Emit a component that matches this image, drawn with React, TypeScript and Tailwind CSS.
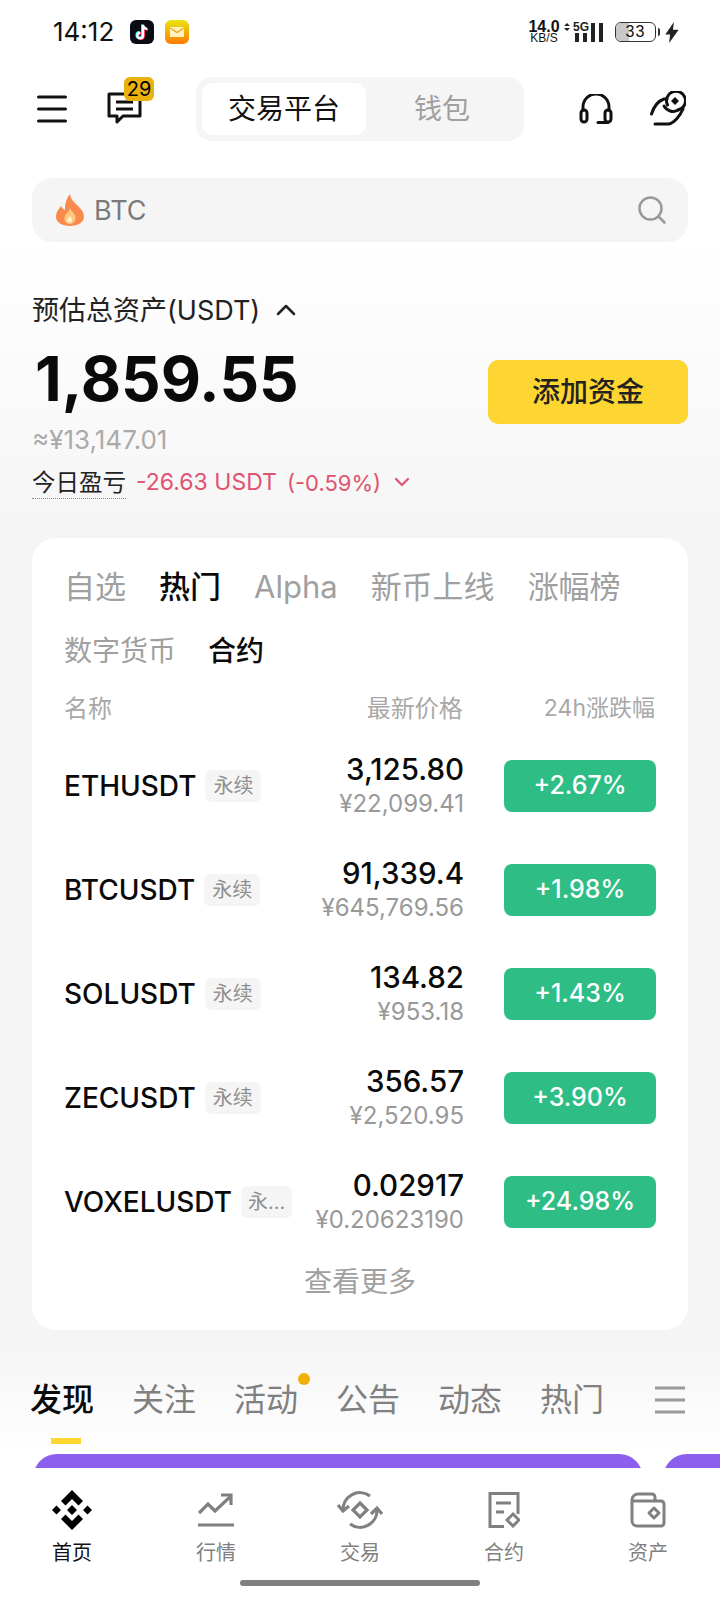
const coins = [
  { name: "ETHUSDT", tag: "永续", price: "3,125.80", cny: "¥22,099.41", change: "+2.67%" },
  { name: "BTCUSDT", tag: "永续", price: "91,339.4", cny: "¥645,769.56", change: "+1.98%" },
  { name: "SOLUSDT", tag: "永续", price: "134.82", cny: "¥953.18", change: "+1.43%" },
  { name: "ZECUSDT", tag: "永续", price: "356.57", cny: "¥2,520.95", change: "+3.90%" },
  { name: "VOXELUSDT", tag: "永...", price: "0.02917", cny: "¥0.20623190", change: "+24.98%" },
];

function StatusBar() {
  return (
    <div className="flex h-[64px] items-center justify-between pl-[53px] pr-[41px]">
      <div className="flex items-center">
        <span className="w-[77px] text-[26px] leading-none text-[#111]">14:12</span>
        <svg width="24" height="24" viewBox="0 0 24 24">
          <rect width="24" height="24" rx="6" fill="#0b0b14" />
          <path d="M13 5v10.5a2.8 2.8 0 1 1-2.8-2.8M13 5c.3 2.4 1.8 3.8 4.2 4" fill="none" stroke="#25f4ee" strokeWidth="2.4" transform="translate(-.8 -.6)" />
          <path d="M13 5v10.5a2.8 2.8 0 1 1-2.8-2.8M13 5c.3 2.4 1.8 3.8 4.2 4" fill="none" stroke="#fe2c55" strokeWidth="2.4" transform="translate(.8 .6)" />
          <path d="M13 5v10.5a2.8 2.8 0 1 1-2.8-2.8M13 5c.3 2.4 1.8 3.8 4.2 4" fill="none" stroke="#fff" strokeWidth="2.2" />
        </svg>
        <svg className="ml-[11px]" width="24" height="24" viewBox="0 0 24 24">
          <defs>
            <linearGradient id="mail" x1="0" y1="0" x2="0" y2="1">
              <stop offset="0" stopColor="#e8e60a" />
              <stop offset="1" stopColor="#ff7a00" />
            </linearGradient>
          </defs>
          <rect width="24" height="24" rx="6" fill="url(#mail)" />
          <rect x="5" y="7" width="14" height="10" rx="1" fill="#fff3c0" />
          <path d="M5.5 8l6.5 4.5L18.5 8" fill="none" stroke="#f59e0b" strokeWidth="1.2" />
        </svg>
      </div>
      <div className="flex items-center text-[#111]">
        <div className="flex w-[30px] flex-col items-center font-['Liberation_Sans',sans-serif]">
          <span className="text-[16px] font-semibold leading-[13px]">14.0</span>
          <span className="text-[12px] leading-[11px]">KB/S</span>
        </div>
        <svg className="ml-[3px]" width="42" height="24" viewBox="0 0 42 24" fill="#222">
          <path d="M2 6l3-3 3 3zM2 8l3 3 3-3z" />
          <text x="11" y="11" fontSize="12" fontWeight="700" fontFamily="Liberation Sans, sans-serif">5G</text>
          <rect x="13" y="13" width="4" height="9" />
          <rect x="21" y="13" width="4" height="9" />
          <rect x="29" y="3" width="4" height="19" />
          <rect x="37" y="3" width="4" height="19" />
        </svg>
        <div className="relative ml-[11px] flex h-[20px] w-[41px] items-center justify-center overflow-hidden rounded-[6px] border border-[#333] text-[16px] leading-none">
          <div className="absolute inset-y-0 left-0 w-[13px] bg-[#c8c8c8]" />
          <span className="relative font-['Liberation_Sans',sans-serif] tracking-[1px]">33</span>
        </div>
        <div className="ml-[2px] h-[8px] w-[2px] rounded-r bg-[#333]" />
        <svg className="ml-[5px]" width="14" height="21" viewBox="0 0 14 22" fill="#222">
          <path d="M9 0L0 13h5l-1 9L14 8H8z" />
        </svg>
      </div>
    </div>
  );
}

function Header() {
  return (
    <div className="mt-[13px] flex h-[64px] items-center pl-[37px] pr-[34px]">
      <svg width="30" height="28" viewBox="0 0 30 28" stroke="#111" strokeWidth="3" strokeLinecap="round">
        <path d="M1.5 2h27M1.5 14h27M1.5 26h27" />
      </svg>
      <div className="relative ml-[40px] h-[64px] w-[50px]">
        <svg className="absolute left-0 top-[15px]" width="35" height="33" viewBox="0 0 35 33" fill="none" stroke="#111" strokeWidth="3" strokeLinejoin="round">
          <path d="M2 2h31v22H16l-6 6v-6H2zM9 10h17M9 17h17" />
        </svg>
        <div className="absolute left-[17px] top-0 flex h-[24px] w-[30px] items-center justify-center rounded-[6px] bg-[#e9b10e] text-[20px] leading-none text-black">
          29
        </div>
      </div>
      <div className="ml-[39px] flex h-[64px] w-[328px] rounded-[16px] bg-[#f5f5f5] p-[6px] text-[28px]">
        <div className="flex w-[164px] items-center justify-center rounded-[11px] bg-white text-[#111]">交易平台</div>
        <div className="flex flex-1 items-center justify-center text-[#a0a0a0]">钱包</div>
      </div>
      <svg className="ml-[55px]" width="34" height="30" viewBox="0 0 34 30" fill="none" stroke="#111" strokeWidth="3" strokeLinecap="round">
        <path d="M4 16v-3a13 13 0 0 1 26 0v3" />
        <rect x="2" y="16" width="6" height="12" rx="3" />
        <rect x="26" y="16" width="6" height="12" rx="3" />
        <path d="M19 28.500h10" />
      </svg>
      <svg className="ml-[37px]" width="36" height="36" viewBox="0 0 36 36" fill="none" stroke="#111" strokeWidth="3" strokeLinecap="round" strokeLinejoin="round">
        <path d="M1.500 23C4 15 8 10 14 8h3" />
        <path d="M5 33h14c5-1 11-8 14-15" />
        <path d="M14 15c3 5 9 7 14 4" />
        <path d="M17.500 14A9.500 9.500 0 1 1 28 19" />
        <path d="M25 6l4 4-4 4-4-4z" fill="#111" stroke="none" />
      </svg>
    </div>
  );
}

function Flame() {
  return (
    <svg width="28" height="32" viewBox="0 0 28 32">
      <path d="M14 0c1 6 4 8 8 12 4 4 6 7 6 11 0 5-6 9-14 9S0 28 0 23c0-5 3-8 5-11 1 2 2 3 4 4C9 10 10 5 14 0z" fill="#f98a4b" />
      <path d="M14 14c1 3 3 4 5 7 2 4-1 9-5 9s-7-4-5-8c1-3 4-4 5-8z" fill="#fdc97d" />
      <path d="M14 22c1 2 3 3 2 5-1 2-5 2-5 0 0-2 2-3 3-5z" fill="#fff0d0" />
    </svg>
  );
}

function AssetSummary() {
  return (
    <div className="mt-[49px] flex items-start justify-between px-[32px]">
      <div>
        <div className="flex h-[38px] items-center text-[27px] leading-none text-[#222]">
          预估总资产(USDT)
          <svg className="ml-[16px]" width="20" height="12" viewBox="0 0 20 12" fill="none" stroke="#222" strokeWidth="2.500" strokeLinecap="round" strokeLinejoin="round">
            <path d="M2 10l8-8 8 8" />
          </svg>
        </div>
        <div className="mt-[15px] h-[70px] pl-[3px] text-[62px] font-bold leading-[70px] text-[#0a0a0a]">1,859.55</div>
        <div className="mt-[11px] text-[26px] leading-[30px] text-[#aaa]">≈¥13,147.01</div>
        <div className="mt-[16px] flex items-center text-[23.5px] leading-none">
          <span className="border-b border-dotted border-[#888] pb-[3px] text-[#222]">今日盈亏</span>
          <span className="ml-[10px] pb-[4px] text-[23px] text-[#e0526f]">-26.63 USDT</span>
          <span className="ml-[10px] pb-[4px] text-[22px] text-[#e0526f]">(-0.59%)</span>
          <svg className="ml-[13px] mb-[6px]" width="16" height="10" viewBox="0 0 16 10" fill="none" stroke="#e0526f" strokeWidth="2.200" strokeLinecap="round" strokeLinejoin="round">
            <path d="M2 2l6 6 6-6" />
          </svg>
        </div>
      </div>
      <button className="mt-[69px] flex h-[64px] w-[200px] items-center justify-center rounded-[10px] bg-[#fdd632] text-[28px] font-medium text-[#222]">
        添加资金
      </button>
    </div>
  );
}

function CoinRow({ name, tag, price, cny, change }: (typeof coins)[number]) {
  return (
    <div className="flex h-[104px] items-center">
      <span className="text-[28px] font-medium leading-none text-[#0a0a0a]">{name}</span>
      <span className={`ml-[9px] flex h-[32px] items-center rounded-[6px] bg-[#f5f5f5] text-[20px] leading-none text-[#909090] ${tag.length > 2 ? "px-[7px]" : "px-[8px]"}`}>{tag}</span>
      <div className="ml-auto text-right">
        <div className="text-[29.5px] font-medium leading-[36px] text-[#0a0a0a]">{price}</div>
        <div className="text-[24px] leading-[34px] text-[#999]">{cny}</div>
      </div>
      <div className="ml-[40px] flex h-[52px] w-[152px] items-center justify-center rounded-[8px] bg-[#2ebd85] text-[25px] font-medium leading-none text-white">
        {change}
      </div>
    </div>
  );
}

function MarketCard() {
  return (
    <div className="mx-[32px] mt-[39px] h-[792px] rounded-[24px] bg-white px-[32px] pt-[29px]">
      <div className="flex h-[40px] gap-[33px] text-[31px] leading-[40px] text-[#a0a0a0]">
        <span>自选</span>
        <span className="font-medium text-[#0a0a0a]">热门</span>
        <span>Alpha</span>
        <span>新币上线</span>
        <span>涨幅榜</span>
      </div>
      <div className="mt-[26px] flex h-[36px] gap-[32px] text-[28px] leading-[36px] text-[#a0a0a0]">
        <span>数字货币</span>
        <span className="font-medium text-[#0a0a0a]">合约</span>
      </div>
      <div className="mt-[24px] flex h-[32px] items-center text-[24px] text-[#a8a8a8]">
        <span>名称</span>
        <span className="ml-auto">最新价格</span>
        <span className="ml-[81px] mr-[1px] text-[23px]">24h涨跌幅</span>
      </div>
      <div className="mt-[9px]">
        {coins.map((c) => (
          <CoinRow key={c.name} {...c} />
        ))}
      </div>
      <div className="mt-[8px] text-center text-[28px] leading-[40px] text-[#a0a0a0]">查看更多</div>
    </div>
  );
}

function FeedTabs() {
  return (
    <div className="mt-[48px] px-[30px]">
      <div className="flex h-[44px] items-center text-[32px] leading-none text-[#808080]">
        <div className="flex gap-[38px]">
          <span className="font-medium text-[#0a0a0a]">发现</span>
          <span>关注</span>
          <span className="relative">
            活动
            <span className="absolute -top-[11px] right-[-12px] h-[12px] w-[12px] rounded-full bg-[#f0b00a]" />
          </span>
          <span>公告</span>
          <span>动态</span>
          <span>热门</span>
        </div>
        <svg className="ml-auto mr-[5px]" width="30" height="28" viewBox="0 0 30 28" stroke="#9a9a9a" strokeWidth="3">
          <path d="M0 2h30M0 14h30M0 26h30" />
        </svg>
      </div>
      <div className="ml-[21px] mt-[16px] h-[6px] w-[30px] bg-[#fdd632]" />
    </div>
  );
}

function Banners() {
  return (
    <div className="mt-[10px] flex h-[14px] gap-[20px] overflow-hidden pl-[33px]">
      <div className="h-[80px] w-[610px] shrink-0 rounded-[24px] bg-[#8c5fec]" />
      <div className="h-[80px] w-[100px] shrink-0 rounded-[24px] bg-[#8c5fec]" />
    </div>
  );
}

function NavIcon({ id }: { id: number }) {
  if (id === 0) {
    return (
      <svg width="40" height="40" viewBox="0 0 40 40" fill="#000">
        <path d="M20 0l11 11-4.500 4.500L20 9l-6.500 6.500L9 11z" />
        <path d="M20 40L9 29l4.500-4.500L20 31l6.500-6.500L31 29z" />
        <path d="M4.500 15.500L9 20l-4.500 4.500L0 20zM35.500 15.500L40 20l-4.500 4.500L31 20zM20 15l5 5-5 5-5-5z" />
      </svg>
    );
  }
  if (id === 1) {
    return (
      <svg width="36" height="34" viewBox="0 0 36 34" fill="none" stroke="#808080" strokeWidth="3.200">
        <path d="M1 20l9-9 7 7L33 3" />
        <path d="M23 2h10v10" />
        <path d="M0 32h36" />
      </svg>
    );
  }
  if (id === 2) {
    return (
      <svg width="46" height="40" viewBox="0 0 46 40" fill="none" stroke="#808080" strokeWidth="3.200">
        <path d="M6 21A17 17 0 0 1 33 6" />
        <path d="M40 19a17 17 0 0 1-27 15" />
        <path d="M1 15l5 6 6-5M34 24l6-6 5 6" />
        <path d="M23 13l7 7-7 7-7-7z" />
      </svg>
    );
  }
  if (id === 3) {
    return (
      <svg width="32" height="36" viewBox="0 0 32 36" fill="none" stroke="#808080" strokeWidth="3">
        <path d="M16 34.500H2V1.500h28V22" />
        <path d="M8 11h15M8 20h8" />
        <path d="M25 22l6 6-6 6-6-6z" />
      </svg>
    );
  }
  return (
    <svg width="36" height="36" viewBox="0 0 36 36" fill="none" stroke="#808080" strokeWidth="3" strokeLinejoin="round">
      <path d="M2 8a6 6 0 0 1 6-6h14a3 3 0 0 1 3 3v4h6a3 3 0 0 1 3 3v19a3 3 0 0 1-3 3H7a5 5 0 0 1-5-5z" />
      <path d="M2 9h23" />
      <path d="M24 16l5 5-5 5-5-5z" />
    </svg>
  );
}

const navItems = ["首页", "行情", "交易", "合约", "资产"];

function BottomNav() {
  return (
    <div className="flex-1 bg-white">
      <div className="grid grid-cols-5 pt-[22px]">
        {navItems.map((label, i) => (
          <div key={label} className="flex flex-col items-center">
            <div className="flex h-[40px] items-center justify-center">
              <NavIcon id={i} />
            </div>
            <span className={`mt-[11px] text-[20px] leading-[24px] ${i === 0 ? "text-[#111]" : "text-[#808080]"}`}>{label}</span>
          </div>
        ))}
      </div>
      <div className="mx-auto mt-[15px] h-[6px] w-[240px] rounded-full bg-[#808080]" />
    </div>
  );
}

export default function App() {
  return (
    <div className="flex h-[1600px] w-[720px] flex-col overflow-hidden bg-[linear-gradient(180deg,#ffffff_240px,#f5f5f5_540px,#f5f5f5_1345px,#ffffff_1450px)] font-['Inter','Noto_Sans_CJK_SC',sans-serif]">
      <StatusBar />
      <Header />
      <div className="mx-[32px] mt-[37px] flex h-[64px] items-center rounded-[20px] bg-[#f5f5f5] pl-[24px] pr-[22px]">
        <Flame />
        <span className="ml-[10px] text-[27px] leading-none text-[#7a7a7a]">BTC</span>
        <svg className="ml-auto" width="28" height="28" viewBox="0 0 28 28" fill="none" stroke="#999" strokeWidth="2.500" strokeLinecap="round">
          <circle cx="12.500" cy="12.500" r="11" />
          <path d="M21 21l5.500 5.500" />
        </svg>
      </div>
      <AssetSummary />
      <MarketCard />
      <FeedTabs />
      <Banners />
      <BottomNav />
    </div>
  );
}
